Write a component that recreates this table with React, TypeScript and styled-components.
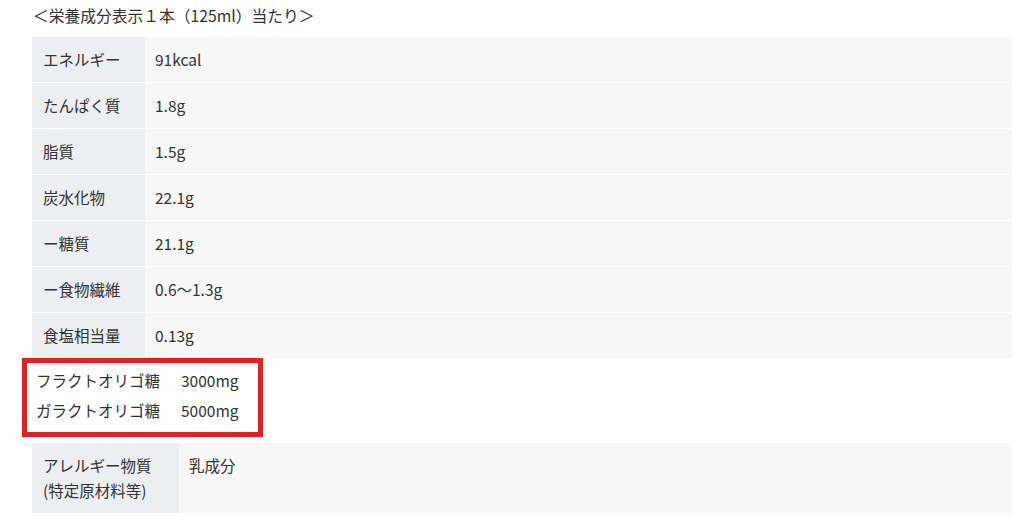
import styled, { createGlobalStyle } from "styled-components";

const GlobalStyle = createGlobalStyle`
  body {
    margin: 0;
    background: #fff;
    font-family: "Noto Sans CJK JP", "Noto Sans", sans-serif;
    color: #333;
  }
`;

const nutrients = [
  ["エネルギー", "91kcal"],
  ["たんぱく質", "1.8g"],
  ["脂質", "1.5g"],
  ["炭水化物", "22.1g"],
  ["ー糖質", "21.1g"],
  ["ー食物繊維", "0.6〜1.3g"],
  ["食塩相当量", "0.13g"],
];

const oligo = [
  ["フラクトオリゴ糖", "3000mg"],
  ["ガラクトオリゴ糖", "5000mg"],
];

export default function App() {
  return (
    <>
      <GlobalStyle />
      <Page>
        <Title>＜栄養成分表示１本（125ml）当たり＞</Title>
        <Table>
          <tbody>
            {nutrients.map(([label, value]) => (
              <tr key={label}>
                <Th $width={113}>{label}</Th>
                <Td>{value}</Td>
              </tr>
            ))}
          </tbody>
        </Table>
        <Highlight>
          {oligo.map(([label, value]) => (
            <OligoRow key={label}>
              <span>{label}</span>
              <span>{value}</span>
            </OligoRow>
          ))}
        </Highlight>
        <AllergyTable>
          <tbody>
            <tr>
              <AllergyTh>
                アレルギー物質
                <br />
                (特定原材料等)
              </AllergyTh>
              <AllergyTd>乳成分</AllergyTd>
            </tr>
          </tbody>
        </AllergyTable>
      </Page>
    </>
  );
}

const Page = styled.div`
  width: 1024px;
  padding: 4px 12px 0 32px;
  box-sizing: border-box;
`;

const Title = styled.p`
  margin: 0 0 9px 1px;
  font-size: 15.75px;
  line-height: 24px;
  color: #333;
`;

const Table = styled.table`
  width: 980px;
  border-collapse: collapse;
  font-size: 15.5px;

  tr {
    border-bottom: 1px solid #fff;
  }
  tr:last-child {
    border-bottom: none;
  }
`;

const Th = styled.th<{ $width: number }>`
  width: ${(p) => p.$width}px;
  box-sizing: border-box;
  height: 45px;
  padding: 0 0 0 11px;
  background: #eceef2;
  text-align: left;
  font-weight: 400;
  line-height: 23px;
  vertical-align: middle;
`;

const Td = styled.td`
  height: 45px;
  padding: 0 0 0 10px;
  background: #f7f7f7;
  line-height: 23px;
  vertical-align: middle;
`;

const Highlight = styled.div`
  width: 241px;
  box-sizing: border-box;
  margin-left: -10px;
  border: 5px solid #e31e24;
  padding: 2px 0 7px 9px;
  font-size: 15.5px;
`;

const OligoRow = styled.div`
  display: grid;
  grid-template-columns: 145px auto;
  line-height: 30px;
`;

const AllergyTable = styled.table`
  width: 980px;
  margin-top: 6px;
  border-collapse: collapse;
  font-size: 15.5px;
`;

const AllergyTh = styled.th`
  width: 147px;
  box-sizing: border-box;
  padding: 10px 0 10px 11px;
  background: #eceef2;
  text-align: left;
  font-weight: 400;
  line-height: 25px;
  vertical-align: top;
`;

const AllergyTd = styled.td`
  padding: 10px 10px;
  background: #f7f7f7;
  line-height: 25px;
  vertical-align: top;
`;
